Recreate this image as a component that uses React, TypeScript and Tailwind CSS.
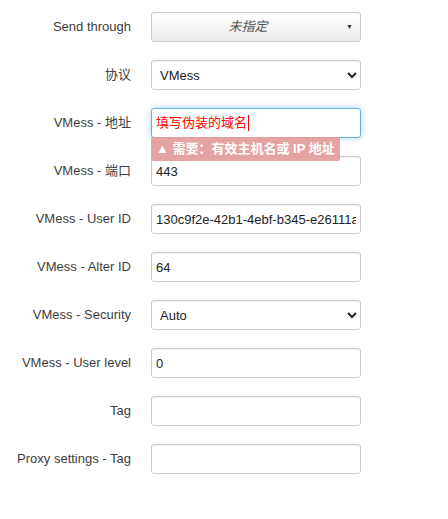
import React from 'react';

const font = { fontFamily: '"Liberation Sans", Arial, "Noto Sans CJK SC", sans-serif' };

const inputCls =
  'h-[30px] w-[210px] rounded-[3px] border border-[#cccccc] bg-white px-[4px] text-[13px] text-[#222] outline-none shadow-[inset_0_1px_1px_rgba(0,0,0,0.06)]';

function Row({ label, children }: { label: string; children: React.ReactNode }) {
  return (
    <div className="flex h-[30px] items-center">
      <div className="w-[131px] shrink-0 text-right text-[13px] text-[#404040]">{label}</div>
      <div className="relative ml-[20px]">{children}</div>
    </div>
  );
}

export default function App() {
  return (
    <div className="min-h-[519px] w-[448px] bg-white pt-[12px]" style={font}>
      <div className="flex flex-col gap-[18px]">
        <Row label="Send through">
          <div className="relative flex h-[30px] w-[210px] items-center justify-center rounded-[3px] border border-[#cccccc] bg-gradient-to-b from-white to-[#ececec] pr-[16px] text-[13px] italic text-[#555]">
            未指定
            <span className="absolute right-[7px] top-[9px] text-[7px] not-italic text-[#333]">▼</span>
          </div>
        </Row>

        <Row label="协议">
          <select className={inputCls + ' text-[#111]'} defaultValue="VMess">
            <option>VMess</option>
          </select>
        </Row>

        <Row label="VMess - 地址">
          <div className="flex h-[30px] w-[210px] items-center rounded-[3px] border border-[#66afe9] bg-white px-[4px] text-[13px] text-[#ff0000] shadow-[0_0_6px_rgba(102,175,233,0.6)]">
            填写伪装的域名
            <span className="ml-px inline-block h-[16px] w-px bg-[#ff0000]" />
          </div>
          <div className="absolute left-0 top-[29px] z-10 whitespace-nowrap rounded-[2px] bg-[#e59e9e]/95 px-[5px] py-[2px] text-[13px] font-bold text-white">
            ▲ 需要：有效主机名或 IP 地址
          </div>
        </Row>

        <Row label="VMess - 端口">
          <input className={inputCls} defaultValue="443" readOnly />
        </Row>

        <Row label="VMess - User ID">
          <input className={inputCls} defaultValue="130c9f2e-42b1-4ebf-b345-e26111a0c3d7" readOnly />
        </Row>

        <Row label="VMess - Alter ID">
          <input className={inputCls} defaultValue="64" readOnly />
        </Row>

        <Row label="VMess - Security">
          <select className={inputCls + ' text-[#111]'} defaultValue="Auto">
            <option>Auto</option>
          </select>
        </Row>

        <Row label="VMess - User level">
          <input className={inputCls} defaultValue="0" readOnly />
        </Row>

        <Row label="Tag">
          <input className={inputCls} defaultValue="" readOnly />
        </Row>

        <Row label="Proxy settings - Tag">
          <input className={inputCls} defaultValue="" readOnly />
        </Row>
      </div>
    </div>
  );
}
